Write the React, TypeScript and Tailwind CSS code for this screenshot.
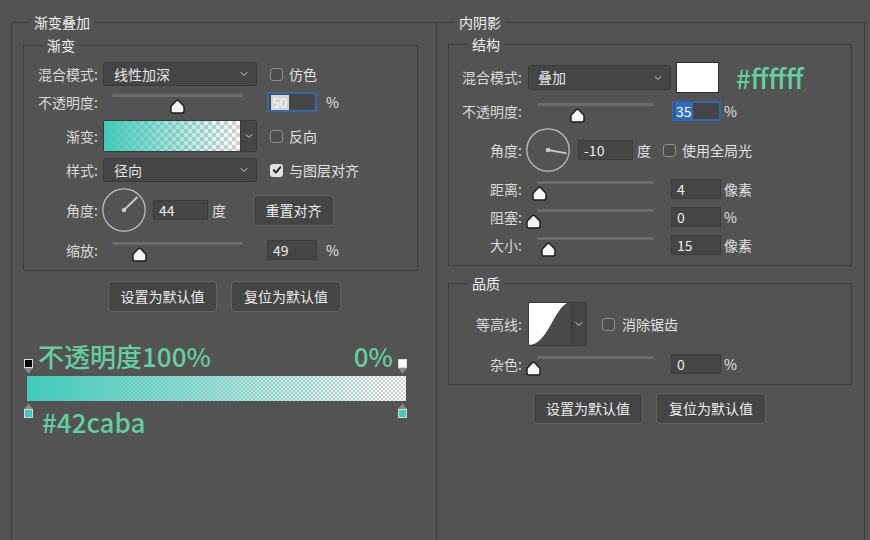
import React from "react";
import { ChevronDown } from "lucide-react";

const GREEN = "text-[#62cfa0]";

function Thumb() {
  return (
    <svg width="15" height="15" viewBox="0 0 15 15">
      <path
        d="M7.5 1.2 Q8.1 1.2 8.7 1.8 L13.5 6.8 Q14 7.3 14 8 L14 12 Q14 14 12 14 L3 14 Q1 14 1 12 L1 8 Q1 7.3 1.5 6.8 L6.3 1.8 Q6.9 1.2 7.5 1.2 Z"
        fill="#f4f4f4"
        stroke="#1c1c1c"
        strokeWidth="1.4"
      />
    </svg>
  );
}

function Slider({ track, pos }: { track: string; pos: number }) {
  return (
    <div className={`relative h-[20px] ${track}`}>
      <div className="mt-[4px] h-[3px] rounded-full bg-[#6c6c6c]" />
      <div className="absolute top-[5px]" style={{ left: pos - 7.5 }}>
        <Thumb />
      </div>
    </div>
  );
}

function Label({ children, w }: { children: React.ReactNode; w: string }) {
  return <div className={`${w} shrink-0 text-right text-[14px] text-[#d9d9d9]`}>{children}</div>;
}

function NumBox({ value, w, ml }: { value: string; w: string; ml: string }) {
  return (
    <div
      className={`${w} ${ml} h-[20px] shrink-0 border border-[#3c3c3c] bg-[#454545] flex items-center pl-[5px] text-[14px] text-[#ececec]`}
    >
      {value}
    </div>
  );
}

function Dropdown({ text, w, h, pl }: { text: string; w: string; h: string; pl: string }) {
  return (
    <div
      className={`${w} ${h} ${pl} shrink-0 rounded-[3px] border border-[#3a3a3a] bg-[#454545] flex items-center justify-between pr-[6px] text-[14px] text-[#e6e6e6]`}
    >
      <span>{text}</span>
      <ChevronDown size={12} strokeWidth={2} color="#cfcfcf" />
    </div>
  );
}

function Check({ checked, ml }: { checked?: boolean; ml: string }) {
  if (checked) {
    return (
      <div className={`${ml} w-[13px] h-[13px] shrink-0 rounded-[3px] bg-[#e2e2e2] flex items-center justify-center`}>
        <svg width="10" height="10" viewBox="0 0 10 10">
          <path d="M1.8 5.2 L4 7.6 L8.4 2.2" fill="none" stroke="#2a2a2a" strokeWidth="2" strokeLinecap="round" strokeLinejoin="round" />
        </svg>
      </div>
    );
  }
  return <div className={`${ml} w-[13px] h-[13px] shrink-0 rounded-[3px] border border-[#8e8e8e] bg-[#4d4d4d]`} />;
}

function Btn({ children, w }: { children: React.ReactNode; w: string }) {
  return (
    <div
      className={`${w} h-[31px] shrink-0 rounded-[4px] border border-[#626262] bg-[#454545] flex items-center justify-center text-[14px] text-[#ececec]`}
    >
      {children}
    </div>
  );
}

function Dial({ deg, ml }: { deg: number; ml: string }) {
  const r = (deg * Math.PI) / 180;
  const x2 = 22 + 18 * Math.cos(r);
  const y2 = 22 - 18 * Math.sin(r);
  return (
    <svg width="44" height="44" viewBox="0 0 44 44" className={`${ml} shrink-0`}>
      <circle cx="22" cy="22" r="21.2" fill="none" stroke="#bcbcbc" strokeWidth="1.3" />
      <line x1="22" y1="22" x2={x2} y2={y2} stroke="#c8c8c8" strokeWidth="2" strokeLinecap="round" />
      <circle cx="22" cy="22" r="2.3" fill="#c8c8c8" />
    </svg>
  );
}

function Grad({ w, h, cell, id }: { w: number; h: number; cell: number; id: string }) {
  return (
    <svg width={w} height={h} className="block shrink-0">
      <defs>
        <pattern id={id + "p"} width={cell * 2} height={cell * 2} patternUnits="userSpaceOnUse">
          <rect width={cell * 2} height={cell * 2} fill="#ffffff" />
          <rect width={cell} height={cell} fill="#cfcfcf" />
          <rect x={cell} y={cell} width={cell} height={cell} fill="#cfcfcf" />
        </pattern>
        <linearGradient id={id + "g"} x1="0" x2="1" y1="0" y2="0">
          <stop offset="0" stopColor="#42caba" stopOpacity="1" />
          <stop offset="1" stopColor="#42caba" stopOpacity="0" />
        </linearGradient>
      </defs>
      <rect width={w} height={h} fill={`url(#${id}p)`} />
      <rect width={w} height={h} fill={`url(#${id}g)`} />
    </svg>
  );
}

function TopStop({ color }: { color: string }) {
  return (
    <div className="flex flex-col items-center w-[9px] shrink-0">
      <div className={`w-[9px] h-[9px] border border-[#d8d8d8] ${color}`} />
      <svg width="9" height="6" viewBox="0 0 9 6" className="block">
        <path d="M0 0 L9 0 L4.5 5.5 Z" fill="#8a8a8a" />
      </svg>
    </div>
  );
}

function BottomStop() {
  return (
    <div className="flex flex-col items-center w-[9px] shrink-0">
      <svg width="9" height="6" viewBox="0 0 9 6" className="block">
        <path d="M4.5 0.5 L9 6 L0 6 Z" fill="#8a8a8a" />
      </svg>
      <div className="w-[9px] h-[9px] border border-[#d8d8d8] bg-[#42caba]" />
    </div>
  );
}

function LeftPanel() {
  const LW = "w-[74px]";
  return (
    <fieldset className="w-[425px] h-[528px] border-t border-l border-[#3d3d3d]">
      <legend className="ml-[18px] px-[4px] text-[14px] leading-[20px] text-[#efefef]">渐变叠加</legend>
      <fieldset className="mt-[3px] ml-[11px] w-[395px] border border-[#3d3d3d] pb-[10px]">
        <legend className="ml-[19px] px-[4px] text-[14px] leading-[20px] text-[#efefef]">渐变</legend>
        {/* 混合模式 */}
        <div className="mt-[7px] h-[24px] flex items-center">
          <Label w={LW}>混合模式:</Label>
          <div className="ml-[5px]">
            <Dropdown text="线性加深" w="w-[154px]" h="h-[24px]" pl="pl-[10px]" />
          </div>
          <Check ml="ml-[13px]" />
          <span className="ml-[6px] text-[14px] text-[#e0e0e0]">仿色</span>
        </div>
        {/* 不透明度 */}
        <div className="mt-[6px] h-[20px] flex items-center">
          <Label w={LW}>不透明度:</Label>
          <div className="ml-[14px]">
            <Slider track="w-[131px]" pos={65} />
          </div>
          <div className="ml-[24px] w-[50px] h-[20px] border-2 border-[#3767ab] bg-[#454545] flex items-center pl-[2px]">
            <span className="bg-[#d4d4d4] text-[#f6f6f6] text-[14px] leading-[15px] px-[1px]">50</span>
          </div>
          <span className="ml-[9px] text-[14px] text-[#e0e0e0]">%</span>
        </div>
        {/* 渐变 */}
        <div className="mt-[8px] h-[32px] flex items-center">
          <Label w={LW}>渐变:</Label>
          <div className="ml-[5px] w-[154px] h-[32px] border border-[#3a3a3a] rounded-[2px] flex overflow-hidden">
            <Grad w={136} h={30} cell={4} id="sw" />
            <div className="flex-1 bg-[#454545] border-l border-[#3a3a3a] flex items-center justify-center">
              <ChevronDown size={12} strokeWidth={2} color="#cfcfcf" />
            </div>
          </div>
          <Check ml="ml-[13px]" />
          <span className="ml-[6px] text-[14px] text-[#e0e0e0]">反向</span>
        </div>
        {/* 样式 */}
        <div className="mt-[6px] h-[24px] flex items-center">
          <Label w={LW}>样式:</Label>
          <div className="ml-[5px]">
            <Dropdown text="径向" w="w-[154px]" h="h-[24px]" pl="pl-[10px]" />
          </div>
          <Check checked ml="ml-[13px]" />
          <span className="ml-[6px] text-[14px] text-[#e0e0e0]">与图层对齐</span>
        </div>
        {/* 角度 */}
        <div className="mt-[6px] h-[44px] flex items-center">
          <Label w={LW}>角度:</Label>
          <Dial deg={44} ml="ml-[4px]" />
          <NumBox value="44" w="w-[55px]" ml="ml-[7px]" />
          <span className="ml-[4px] text-[14px] text-[#e0e0e0]">度</span>
          <div className="ml-[27px]">
            <Btn w="w-[81px]">重置对齐</Btn>
          </div>
        </div>
        {/* 缩放 */}
        <div className="mt-[8px] h-[20px] flex items-center">
          <Label w={LW}>缩放:</Label>
          <div className="ml-[14px]">
            <Slider track="w-[131px]" pos={27} />
          </div>
          <NumBox value="49" w="w-[50px]" ml="ml-[24px]" />
          <span className="ml-[9px] text-[14px] text-[#e0e0e0]">%</span>
        </div>
      </fieldset>

      <div className="mt-[10px] ml-[96px] flex gap-[14px]">
        <Btn w="w-[109px]">设置为默认值</Btn>
        <Btn w="w-[110px]">复位为默认值</Btn>
      </div>

      {/* gradient editor */}
      <div className="ml-[12px] w-[383px] mt-[31px]">
        <div className="flex items-end justify-between">
          <div className="flex items-end">
            <TopStop color="bg-black" />
            <span className={`ml-[5px] mb-[5px] text-[26px] leading-[26px] font-medium ${GREEN}`}>不透明度100%</span>
          </div>
          <div className="flex items-end">
            <span className={`mb-[5px] text-[26px] leading-[26px] font-medium ${GREEN}`}>0%</span>
            <div className="ml-[5px]">
              <TopStop color="bg-white" />
            </div>
          </div>
        </div>
        <div className="mt-[2px] ml-[3px]">
          <Grad w={379} h={25} cell={2} id="bar" />
        </div>
        <div className="mt-[2px] flex items-start justify-between">
          <div className="flex items-start">
            <BottomStop />
            <span className={`ml-[9px] mt-[6px] text-[26px] leading-[26px] font-medium ${GREEN}`}>#42caba</span>
          </div>
          <BottomStop />
        </div>
      </div>
    </fieldset>
  );
}

function RightPanel() {
  const LW = "w-[73px]";
  return (
    <fieldset className="w-[429px] h-[528px] border-t border-l border-r border-[#3d3d3d]">
      <legend className="ml-[18px] px-[4px] text-[14px] leading-[20px] text-[#efefef]">内阴影</legend>
      <fieldset className="mt-[2px] ml-[11px] w-[404px] border border-[#3d3d3d] pb-[10px]">
        <legend className="ml-[19px] px-[4px] text-[14px] leading-[20px] text-[#efefef]">结构</legend>
        <div className="mt-[8px] h-[31px] flex items-center">
          <Label w={LW}>混合模式:</Label>
          <div className="ml-[6px]">
            <Dropdown text="叠加" w="w-[143px]" h="h-[25px]" pl="pl-[9px]" />
          </div>
          <div className="ml-[5px] w-[43px] h-[31px] bg-white border border-[#2e2e2e]" />
          <span className={`ml-[17px] text-[26px] leading-[30px] font-medium ${GREEN}`}>#ffffff</span>
        </div>
        <div className="mt-[8px] h-[20px] flex items-center">
          <Label w={LW}>不透明度:</Label>
          <div className="ml-[15px]">
            <Slider track="w-[117px]" pos={40} />
          </div>
          <div className="ml-[18px] w-[49px] h-[20px] border-2 border-[#2f64b0] bg-[#454545] flex items-center pl-[1px]">
            <span className="bg-[#2d6fc4] text-white text-[14px] leading-[16px] px-[1px]">35</span>
          </div>
          <span className="ml-[3px] text-[14px] text-[#e0e0e0]">%</span>
        </div>
        <div className="mt-[7px] h-[44px] flex items-center">
          <Label w={LW}>角度:</Label>
          <Dial deg={-10} ml="ml-[4px]" />
          <NumBox value="-10" w="w-[55px]" ml="ml-[8px]" />
          <span className="ml-[4px] text-[14px] text-[#e0e0e0]">度</span>
          <Check ml="ml-[12px]" />
          <span className="ml-[6px] text-[14px] text-[#e0e0e0]">使用全局光</span>
        </div>
        {[
          { l: "距离:", p: 2, v: "4", u: "像素", m: "mt-[7px]" },
          { l: "阻塞:", p: -4, v: "0", u: "%", m: "mt-[8px]" },
          { l: "大小:", p: 11, v: "15", u: "像素", m: "mt-[8px]" },
        ].map((r) => (
          <div key={r.l} className={`${r.m} h-[20px] flex items-center`}>
            <Label w={LW}>{r.l}</Label>
            <div className="ml-[15px]">
              <Slider track="w-[117px]" pos={r.p} />
            </div>
            <NumBox value={r.v} w="w-[50px]" ml="ml-[17px]" />
            <span className="ml-[3px] text-[14px] text-[#e0e0e0]">{r.u}</span>
          </div>
        ))}
      </fieldset>

      <fieldset className="mt-[7px] ml-[11px] w-[404px] border border-[#3d3d3d] pb-[10px]">
        <legend className="ml-[19px] px-[4px] text-[14px] leading-[20px] text-[#efefef]">品质</legend>
        <div className="mt-[9px] h-[44px] flex items-center">
          <Label w={LW}>等高线:</Label>
          <div className="ml-[6px] w-[59px] h-[44px] border border-[#3a3a3a] rounded-[2px] flex overflow-hidden">
            <svg width="42" height="42" viewBox="0 0 42 42" className="block shrink-0">
              <rect width="42" height="42" fill="#ffffff" />
              <path d="M0 42 C18 42 24 8 38 0 L42 0 L42 42 Z" fill="#4a4a4a" />
            </svg>
            <div className="flex-1 bg-[#454545] border-l border-[#3a3a3a] flex items-center justify-center">
              <ChevronDown size={12} strokeWidth={2} color="#cfcfcf" />
            </div>
          </div>
          <Check ml="ml-[15px]" />
          <span className="ml-[7px] text-[14px] text-[#e0e0e0]">消除锯齿</span>
        </div>
        <div className="mt-[8px] h-[20px] flex items-center">
          <Label w={LW}>杂色:</Label>
          <div className="ml-[15px]">
            <Slider track="w-[117px]" pos={-4} />
          </div>
          <NumBox value="0" w="w-[50px]" ml="ml-[17px]" />
          <span className="ml-[3px] text-[14px] text-[#e0e0e0]">%</span>
        </div>
      </fieldset>

      <div className="mt-[8px] ml-[96px] flex gap-[13px]">
        <Btn w="w-[110px]">设置为默认值</Btn>
        <Btn w="w-[110px]">复位为默认值</Btn>
      </div>
    </fieldset>
  );
}

export default function App() {
  return (
    <div className="w-[870px] h-[540px] overflow-hidden bg-[#535353] flex pt-[12px] font-['Noto_Sans_CJK_SC','Noto_Sans',sans-serif]">
      <div className="ml-[11px] shrink-0">
        <LeftPanel />
      </div>
      <div className="shrink-0">
        <RightPanel />
      </div>
    </div>
  );
}
